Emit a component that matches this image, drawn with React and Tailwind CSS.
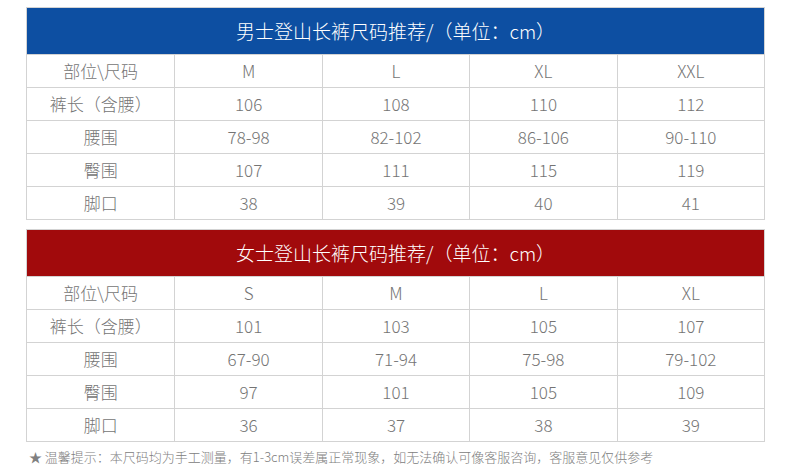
const MEN = {
  title: '男士登山长裤尺码推荐/（单位：cm）',
  color: 'bg-[#0d4fa2]',
  sizes: ['M', 'L', 'XL', 'XXL'],
  rows: [
    ['裤长（含腰）', '106', '108', '110', '112'],
    ['腰围', '78-98', '82-102', '86-106', '90-110'],
    ['臀围', '107', '111', '115', '119'],
    ['脚口', '38', '39', '40', '41'],
  ],
};

const WOMEN = {
  title: '女士登山长裤尺码推荐/（单位：cm）',
  color: 'bg-[#a10a0c]',
  sizes: ['S', 'M', 'L', 'XL'],
  rows: [
    ['裤长（含腰）', '101', '103', '105', '107'],
    ['腰围', '67-90', '71-94', '75-98', '79-102'],
    ['臀围', '97', '101', '105', '109'],
    ['脚口', '36', '37', '38', '39'],
  ],
};

function SizeTable({ data }) {
  const allRows = [['部位\\尺码', ...data.sizes], ...data.rows];
  return (
    <div className="w-[739px] border border-[#d3d3d3]">
      <div className={`${data.color} h-[46px] flex items-center justify-center text-white text-[19px] font-light`}>
        {data.title}
      </div>
      {allRows.map((row, i) => (
        <div key={i} className="grid grid-cols-5 h-[33px] border-t border-[#d3d3d3]">
          {row.map((cell, j) => (
            <div
              key={j}
              className={`flex items-center justify-center text-[17px] text-[#747474] font-light ${j > 0 ? 'border-l border-[#d3d3d3]' : ''}`}
            >
              {cell}
            </div>
          ))}
        </div>
      ))}
    </div>
  );
}

export default function App() {
  return (
    <div
      className="w-[790px] h-[471px] bg-white pt-[7px] pl-[26px]"
      style={{ fontFamily: '"Noto Sans CJK SC", "Noto Sans", sans-serif' }}
    >
      <SizeTable data={MEN} />
      <div className="h-[9px]" />
      <SizeTable data={WOMEN} />
      <div className="mt-[5px] pl-[3px] text-[13px] text-[#808080] font-light">
        ★ 温馨提示：本尺码均为手工测量，有1-3cm误差属正常现象，如无法确认可像客服咨询，客服意见仅供参考
      </div>
    </div>
  );
}
